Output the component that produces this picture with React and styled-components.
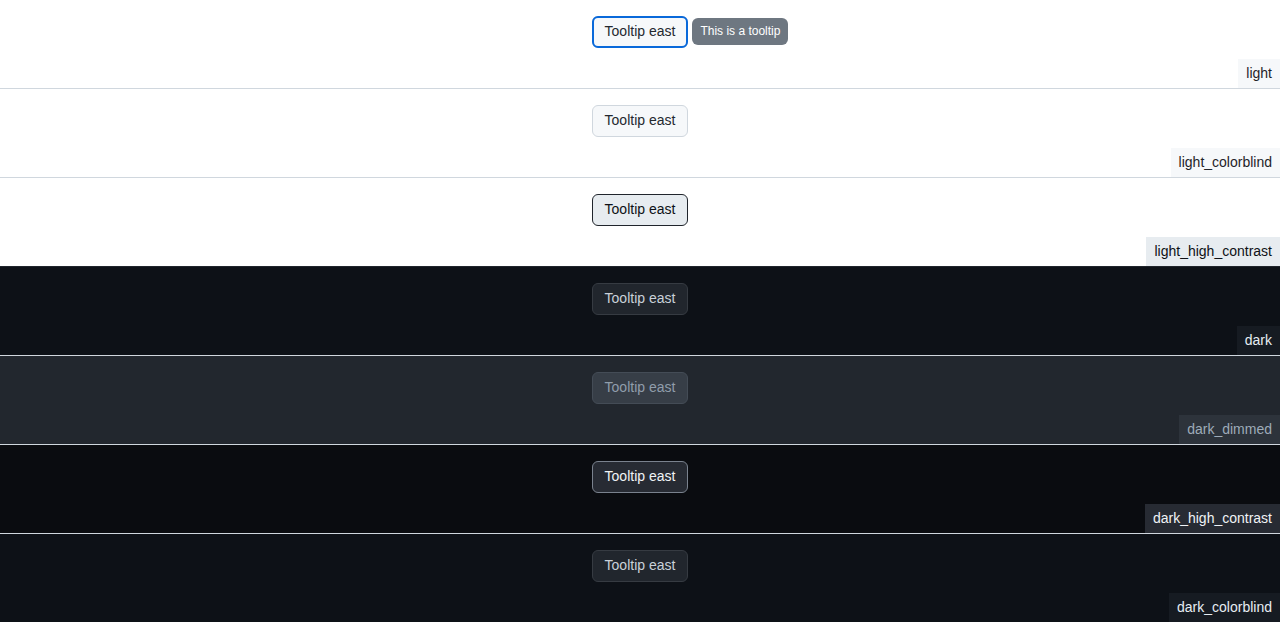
import React from 'react';
import styled, { createGlobalStyle } from 'styled-components';

const GlobalStyle = createGlobalStyle`
  body {
    margin: 0;
    font-family: "Liberation Sans", Arial, sans-serif;
    font-size: 14px;
  }
`;

const themes = [
  {
    name: 'light',
    bg: '#ffffff',
    line: '#d0d7de',
    btnBg: '#f6f8fa',
    btnBorder: '#d0d7de',
    btnText: '#24292f',
    labelBg: '#f6f8fa',
    labelText: '#1f2328',
    focused: true,
  },
  {
    name: 'light_colorblind',
    bg: '#ffffff',
    line: '#d0d7de',
    btnBg: '#f6f8fa',
    btnBorder: '#d0d7de',
    btnText: '#24292f',
    labelBg: '#f6f8fa',
    labelText: '#1f2328',
  },
  {
    name: 'light_high_contrast',
    bg: '#ffffff',
    line: '#20252c',
    btnBg: '#e7ecf0',
    btnBorder: '#20252c',
    btnText: '#0e1116',
    labelBg: '#e7ecf0',
    labelText: '#0e1116',
  },
  {
    name: 'dark',
    bg: '#0d1117',
    line: '#d0d7de',
    btnBg: '#21262d',
    btnBorder: '#363b42',
    btnText: '#c9d1d9',
    labelBg: '#161b22',
    labelText: '#e6edf3',
  },
  {
    name: 'dark_dimmed',
    bg: '#22272e',
    line: '#d0d7de',
    btnBg: '#373e47',
    btnBorder: '#444c56',
    btnText: '#909dab',
    labelBg: '#2d333b',
    labelText: '#9eabb8',
  },
  {
    name: 'dark_high_contrast',
    bg: '#0a0c10',
    line: '#d0d7de',
    btnBg: '#272b33',
    btnBorder: '#7a828e',
    btnText: '#f0f3f6',
    labelBg: '#272b33',
    labelText: '#f0f3f6',
  },
  {
    name: 'dark_colorblind',
    bg: '#0d1117',
    line: '#d0d7de',
    btnBg: '#21262d',
    btnBorder: '#363b42',
    btnText: '#c9d1d9',
    labelBg: '#161b22',
    labelText: '#e6edf3',
  },
];

const Section = styled.section`
  position: relative;
  box-sizing: border-box;
  height: 89px;
  padding-top: 16px;
  display: flex;
  justify-content: center;
  align-items: flex-start;
  background: ${(p) => p.$t.bg};
  border-bottom: 1px solid ${(p) => p.$t.line};
`;

const Anchor = styled.div`
  position: relative;
`;

const Button = styled.button`
  box-sizing: border-box;
  height: 32px;
  padding: 0 12px 2px;
  font-family: "Liberation Sans", Arial, sans-serif;
  font-size: 14px;
  font-weight: 400;
  line-height: 20px;
  border-radius: 6px;
  cursor: pointer;
  background: ${(p) => p.$t.btnBg};
  color: ${(p) => p.$t.btnText};
  border: 1px solid ${(p) => p.$t.btnBorder};
  outline: ${(p) => (p.$t.focused ? '2px solid #0969da' : 'none')};
  outline-offset: -2px;
`;

const Tooltip = styled.span`
  position: absolute;
  left: calc(100% + 4px);
  top: 2px;
  white-space: nowrap;
  padding: 4px 8px;
  font-size: 12px;
  line-height: 19px;
  color: #ffffff;
  background: #6e7781;
  border-radius: 6px;
`;

const Label = styled.div`
  position: absolute;
  right: 0;
  bottom: 0;
  padding: 4px 8px;
  line-height: 21px;
  font-size: 14px;
  background: ${(p) => p.$t.labelBg};
  color: ${(p) => p.$t.labelText};
`;

const App = () => (
  <>
    <GlobalStyle />
    {themes.map((t) => (
      <Section key={t.name} $t={t}>
        <Anchor>
          <Button $t={t}>Tooltip east</Button>
          {t.focused && <Tooltip>This is a tooltip</Tooltip>}
        </Anchor>
        <Label $t={t}>{t.name}</Label>
      </Section>
    ))}
  </>
);

export default App;
